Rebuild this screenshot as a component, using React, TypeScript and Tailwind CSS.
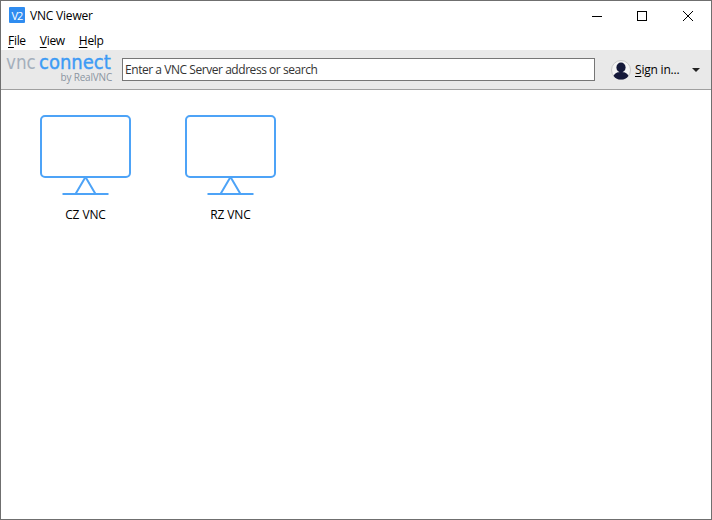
function MonitorIcon() {
  return (
    <svg width="91" height="82" viewBox="0 0 91 82" fill="none" stroke="#4da3f7" strokeWidth="2">
      <rect x="1" y="1" width="89" height="61" rx="4" />
      <path d="M45.5 62 L35.5 79 M45.5 62 L55.5 79" />
      <path d="M22.5 79 H68.5" />
    </svg>
  );
}

function Connection({ name }: { name: string }) {
  return (
    <div className="flex w-[91px] flex-col items-center">
      <MonitorIcon />
      <div className="mt-[10px] text-[12px] leading-[16px] tracking-[-0.1px] text-black">{name}</div>
    </div>
  );
}

function AppIcon() {
  return (
    <div className="mb-[2px] flex h-4 w-4 items-center justify-center rounded-[1px] bg-[#2f8cf0] text-[11px] leading-none font-normal tracking-[-1px] text-white">
      V2
    </div>
  );
}

function MenuItem({ letter, rest }: { letter: string; rest: string }) {
  return (
    <span>
      <span className="underline underline-offset-2">{letter}</span>
      {rest}
    </span>
  );
}

function Avatar() {
  return (
    <svg width="20" height="20" viewBox="0 0 20 20">
      <circle cx="10" cy="10" r="9.5" fill="#f4f4f4" stroke="#c9c9c9" strokeWidth="1" />
      <ellipse cx="10" cy="7.5" rx="4.6" ry="5" fill="#15193a" />
      <path d="M2.6 16 C4 12.5 7 12 10 12 C13 12 16 12.5 17.4 16 C15.5 18.6 13 19.6 10 19.6 C7 19.6 4.5 18.6 2.6 16 Z" fill="#15193a" />
    </svg>
  );
}

function Logo() {
  return (
    <div className="flex w-[106px] flex-col items-end">
      <div className="flex h-[17px] w-[106px] items-center font-['DejaVu_Sans',sans-serif] text-[20px] leading-[17px] whitespace-nowrap">
        <div className="w-[33px]">
          <span className="inline-block origin-left scale-x-[0.84] text-[#a4afbc]">vnc</span>
        </div>
        <div className="w-[73px]">
          <span className="inline-block origin-left scale-x-[0.9] text-[#3d9bf5] [-webkit-text-stroke:0.4px_#3d9bf5]">connect</span>
        </div>
      </div>
      <div className="text-[10px] leading-[13px] tracking-[-0.2px] text-[#8b95a1]">by RealVNC</div>
    </div>
  );
}

export default function App() {
  return (
    <div className="flex h-[520px] w-[712px] flex-col border border-[#6f6f6f] bg-white font-['Open_Sans','Noto_Sans',sans-serif] text-black">
      {/* Title bar */}
      <div className="flex h-[30px] items-center pl-[8px]">
        <AppIcon />
        <span className="ml-[5px] text-[12px] tracking-[-0.2px]">VNC Viewer</span>
        <div className="ml-auto flex h-full items-center pr-px">
          <div className="flex h-full w-[45px] items-center justify-center">
            <div className="h-px w-[10px] bg-black" />
          </div>
          <div className="flex h-full w-[46px] items-center justify-center">
            <div className="h-[10px] w-[10px] border border-black" />
          </div>
          <div className="flex h-full w-[45px] items-center justify-center">
            <svg width="10" height="10" viewBox="0 0 10 10" stroke="black" strokeWidth="1">
              <path d="M0 0 L10 10 M10 0 L0 10" />
            </svg>
          </div>
        </div>
      </div>

      {/* Menu bar */}
      <div className="flex h-[19px] items-center gap-[14px] pt-px pl-[7px] text-[12px] tracking-[-0.3px]">
        <MenuItem letter="F" rest="ile" />
        <MenuItem letter="V" rest="iew" />
        <MenuItem letter="H" rest="elp" />
      </div>

      {/* Toolbar */}
      <div className="flex h-[40px] items-center border-b border-[#a0a0a0] bg-[#e9e9e9] pl-[5px]">
        <div className="mb-[2px]">
          <Logo />
        </div>
        <div className="ml-[10px] flex h-[23px] w-[473px] items-center border border-[#767676] bg-white pl-[2px] text-[12px] tracking-[-0.45px] text-[#333]">
          Enter a VNC Server address or search
        </div>
        <div className="ml-[16px] flex items-center">
          <Avatar />
          <span className="ml-[4px] text-[12px] tracking-[-0.2px]">
            <span className="underline underline-offset-2">S</span>ign in...
          </span>
          <div className="ml-[13px] h-0 w-0 border-x-[4px] border-t-[4px] border-x-transparent border-t-[#222]" />
        </div>
      </div>

      {/* Connections */}
      <div className="flex flex-1 items-start gap-[54px] pt-[25px] pl-[39px]">
        <Connection name="CZ VNC" />
        <Connection name="RZ VNC" />
      </div>
    </div>
  );
}
